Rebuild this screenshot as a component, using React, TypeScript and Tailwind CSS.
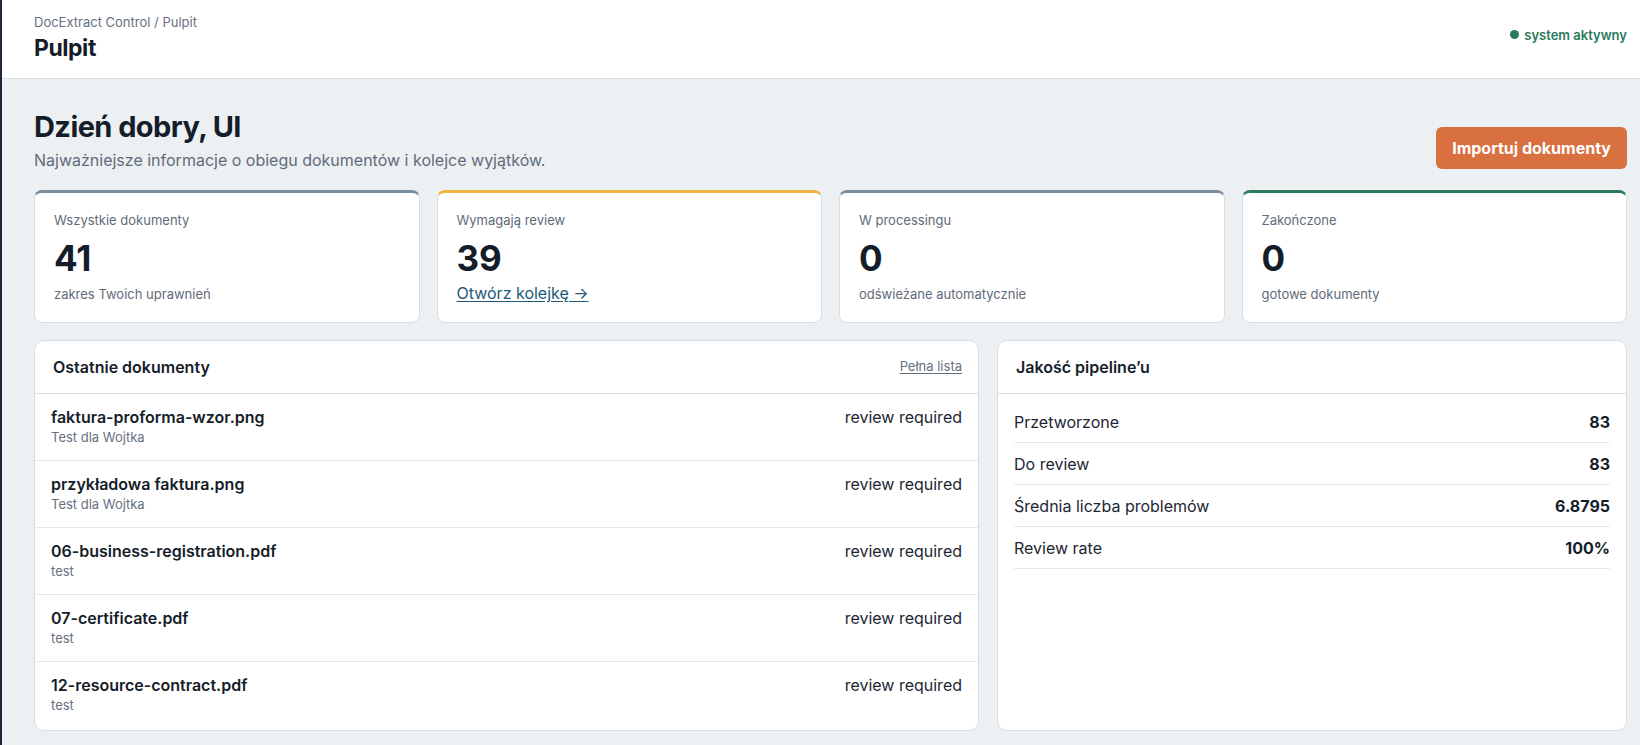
const STATS = [
  { label: 'Wszystkie dokumenty', value: '41', note: 'zakres Twoich uprawnień', bar: 'border-t-[#7a8e9e]' },
  { label: 'Wymagają review', value: '39', link: 'Otwórz kolejkę →', bar: 'border-t-[#efb43f]' },
  { label: 'W processingu', value: '0', note: 'odświeżane automatycznie', bar: 'border-t-[#7a8e9e]' },
  { label: 'Zakończone', value: '0', note: 'gotowe dokumenty', bar: 'border-t-[#2a7a5c]' },
]

const DOCS = [
  { name: 'faktura-proforma-wzor.png', desc: 'Test dla Wojtka' },
  { name: 'przykładowa faktura.png', desc: 'Test dla Wojtka' },
  { name: '06-business-registration.pdf', desc: 'test' },
  { name: '07-certificate.pdf', desc: 'test' },
  { name: '12-resource-contract.pdf', desc: 'test' },
]

const QUALITY = [
  { label: 'Przetworzone', value: '83' },
  { label: 'Do review', value: '83' },
  { label: 'Średnia liczba problemów', value: '6.8795' },
  { label: 'Review rate', value: '100%' },
]

export default function App() {
  return (
    <div
      className="min-h-[745px] bg-[#edf0f3] border-l-2 border-[#1c2838] text-[#151d2a]"
      style={{ fontFamily: 'Inter, "Noto Sans", sans-serif' }}
    >
      <header className="h-[79px] bg-white border-b border-[#d8dde3] pl-8 pr-[13px] pt-[12px] flex justify-between">
        <div>
          <p className="text-[13px] leading-5 text-[#667180]">DocExtract Control / Pulpit</p>
          <h1 className="text-[23px] leading-8 font-bold tracking-[-0.02em]">Pulpit</h1>
        </div>
        <div className="mt-[14px] flex items-start gap-[5px] h-[18px]">
          <span className="w-[9px] h-[9px] mt-[4px] rounded-full bg-[#2a7a5c]" />
          <span className="text-[13px] leading-[18px] font-semibold text-[#2a7a5c]">system aktywny</span>
        </div>
      </header>

      <main className="pl-8 pr-[13px] pt-[31px]">
        <div className="flex items-start justify-between">
          <div>
            <h2 className="text-[29px] leading-[34px] font-bold tracking-[-0.02em]">Dzień dobry, UI</h2>
            <p className="mt-[4px] text-[16px] leading-6 text-[#5f6b7a]">
              Najważniejsze informacje o obiegu dokumentów i kolejce wyjątków.
            </p>
          </div>
          <button className="mt-[17px] h-[42px] px-[16px] rounded-md bg-[#d8703f] text-white text-[16px] font-bold">
            Importuj dokumenty
          </button>
        </div>

        <div className="mt-[18px] grid grid-cols-4 gap-[17px]">
          {STATS.map((s) => (
            <div
              key={s.label}
              className={`h-[133px] bg-white rounded-lg border border-[#d8dde3] border-t-[3px] ${s.bar} px-[19px] pt-[17px]`}
            >
              <p className="text-[13px] leading-5 text-[#5f6b7a]">{s.label}</p>
              <p className="mt-[10px] text-[35px] leading-[37px] font-bold">{s.value}</p>
              {s.link ? (
                <a className="mt-[4px] block text-[16px] leading-6 text-[#1d5a7a] underline underline-offset-2">{s.link}</a>
              ) : (
                <p className="mt-[7px] text-[13px] leading-5 text-[#5f6b7a]">{s.note}</p>
              )}
            </div>
          ))}
        </div>

        <div className="mt-[17px] grid grid-cols-[3fr_2fr] gap-[18px]">
          <section className="bg-white rounded-[10px] border border-[#d8dde3] overflow-hidden">
            <div className="h-[53px] border-b border-[#d8dde3] pl-[18px] pr-4 flex items-center justify-between">
              <h3 className="text-[16px] font-semibold">Ostatnie dokumenty</h3>
              <a className="text-[13px] text-[#667180] underline underline-offset-2">Pełna lista</a>
            </div>
            {DOCS.map((d, i) => (
              <div
                key={d.name}
                className={`px-4 pt-[13px] flex justify-between ${i < DOCS.length - 1 ? 'pb-[13px] border-b border-[#e6e9ed]' : 'pb-[15px]'}`}
              >
                <div>
                  <p className="text-[16px] leading-5 font-semibold">{d.name}</p>
                  <p className="text-[13px] leading-5 text-[#667180]">{d.desc}</p>
                </div>
                <span className="text-[16px] leading-5 text-[#1e2633]">review required</span>
              </div>
            ))}
          </section>

          <section className="bg-white rounded-[10px] border border-[#d8dde3] overflow-hidden">
            <div className="h-[53px] border-b border-[#d8dde3] px-[18px] flex items-center">
              <h3 className="text-[16px] font-semibold">Jakość pipeline’u</h3>
            </div>
            <div className="px-4 pt-[7px]">
              {QUALITY.map((q) => (
                <div key={q.label} className="h-[42px] border-b border-[#e6e9ed] flex items-center justify-between">
                  <span className="text-[16px] text-[#1e2633]">{q.label}</span>
                  <span className="text-[16px] font-bold">{q.value}</span>
                </div>
              ))}
            </div>
          </section>
        </div>
      </main>
    </div>
  )
}
